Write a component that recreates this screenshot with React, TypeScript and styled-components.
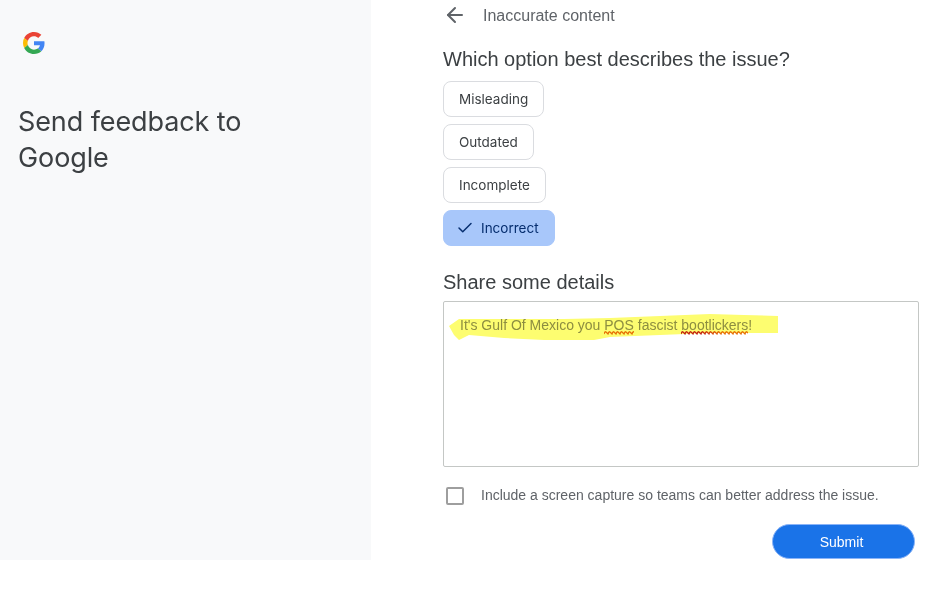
import styled, { createGlobalStyle } from "styled-components";
import { ArrowLeft, Check } from "lucide-react";

const GlobalStyle = createGlobalStyle`
  html, body {
    margin: 0;
    padding: 0;
    background: #fff;
    overflow: hidden;
  }
  * {
    box-sizing: border-box;
  }
`;

const Page = styled.div`
  display: flex;
  width: 944px;
  height: 589px;
  font-family: "Liberation Sans", Arial, sans-serif;
`;

const Sidebar = styled.aside`
  flex: 0 0 371px;
  height: 560px;
  background: #f8f9fa;
  padding: 32px 18px 0;
`;

const Logo = styled.svg`
  display: block;
  width: 22px;
  height: 22px;
  margin-left: 5px;
`;

const SideTitle = styled.h1`
  margin: 50px 0 0;
  font-family: Inter, Roboto, sans-serif;
  font-size: 27px;
  line-height: 36px;
  font-weight: 400;
  letter-spacing: -0.1px;
  color: #3c4043;
  width: 260px;
`;

const Main = styled.main`
  flex: 1;
  padding: 0 25px 0 72px;
`;

const TopBar = styled.div`
  display: flex;
  align-items: center;
  height: 31px;
`;

const BackIcon = styled(ArrowLeft)`
  width: 24px;
  height: 24px;
  margin-top: -1px;
  margin-right: 16px;
  color: #5f6368;
`;

const TopTitle = styled.span`
  font-size: 16px;
  color: #5f6368;
`;

const SectionTitle = styled.h2`
  margin: 0;
  font-size: 20px;
  line-height: 28px;
  font-weight: 400;
  color: #3c4043;
`;

const QuestionTitle = styled(SectionTitle)`
  margin-top: 14px;
  margin-bottom: 8px;
`;

const DetailsTitle = styled(SectionTitle)`
  margin-top: 22px;
  margin-bottom: 5px;
`;

const Chips = styled.div`
  display: flex;
  flex-direction: column;
  align-items: flex-start;
  gap: 7px;
`;

const Chip = styled.button<{ $selected?: boolean }>`
  display: flex;
  align-items: center;
  height: 36px;
  padding: 0 15px;
  border: 1px solid ${(p) => (p.$selected ? "#a8c7fa" : "#dadce0")};
  border-radius: 8px;
  background: ${(p) => (p.$selected ? "#a8c7fa" : "#fff")};
  color: ${(p) => (p.$selected ? "#062e6f" : "#3c4043")};
  font-family: Inter, Roboto, sans-serif;
  font-size: 13.5px;
`;

const ChipCheck = styled(Check)`
  width: 18px;
  height: 18px;
  margin: 0 7px 0 -3px;
`;

const DetailsBox = styled.div`
  position: relative;
  width: 476px;
  height: 166px;
  border: 1px solid #c4c7c5;
  border-radius: 2px;
  padding: 15px 16px;
  font-size: 14px;
  line-height: 16px;
  color: #8e8f92;
`;

const Misspelled = styled.span`
  position: relative;
`;

const SquiggleLine = styled.svg`
  position: absolute;
  left: 0;
  top: 14px;
  height: 4px;
`;

const Highlight = styled.svg`
  position: absolute;
  left: 0;
  top: 0;
  width: 340px;
  height: 45px;
  pointer-events: none;
  mix-blend-mode: multiply;
`;

const ConsentRow = styled.label`
  display: flex;
  align-items: center;
  margin-top: 17px;
  font-size: 14px;
  color: #5f6368;
`;

const Box = styled.span`
  width: 18px;
  height: 18px;
  margin: 3px 17px 0 3px;
  border: 2px solid #9e9e9e;
  border-radius: 2px;
`;

const Actions = styled.div`
  display: flex;
  justify-content: flex-end;
  margin-top: 19px;
  padding-right: 4px;
`;

const SubmitButton = styled.button`
  width: 143px;
  height: 35px;
  border: 1px solid #8ab4f8;
  border-radius: 18px;
  background: #1a73e8;
  padding: 0 4px 0 0;
  color: #fff;
  font-family: "Liberation Sans", Arial, sans-serif;
  font-size: 14px;
`;

const options = ["Misleading", "Outdated", "Incomplete"];

function Squiggle({ id, width, from, to }: { id: string; width: number; from: string; to: string }) {
  let d = "M0 3";
  for (let x = 0; x < width; x += 4) {
    d += ` q1 -3 2 -2 q1 1 2 2`;
  }
  return (
    <SquiggleLine width={width} viewBox={`0 0 ${width} 4`}>
      <defs>
        <linearGradient id={id} gradientUnits="userSpaceOnUse" x1="0" y1="0" x2={width} y2="0">
          <stop offset="0.3" stopColor={from} />
          <stop offset="0.6" stopColor={to} />
        </linearGradient>
      </defs>
      <path d={d} fill="none" stroke={`url(#${id})`} strokeWidth="1.2" />
    </SquiggleLine>
  );
}

export default function App() {
  return (
    <Page>
      <GlobalStyle />
      <Sidebar>
        <Logo viewBox="0 0 48 48">
          <path fill="#EA4335" d="M24 9.5c3.54 0 6.71 1.22 9.21 3.6l6.85-6.85C35.9 2.38 30.47 0 24 0 14.62 0 6.51 5.38 2.56 13.22l7.98 6.19C12.43 13.72 17.74 9.5 24 9.5z" />
          <path fill="#4285F4" d="M46.98 24.55c0-1.57-.15-3.09-.38-4.55H24v9.02h12.94c-.58 2.96-2.26 5.48-4.78 7.18l7.73 6c4.51-4.18 7.09-10.36 7.09-17.65z" />
          <path fill="#FBBC05" d="M10.53 28.59c-.48-1.45-.76-2.99-.76-4.59s.27-3.14.76-4.59l-7.98-6.19C.92 16.46 0 20.12 0 24c0 3.88.92 7.54 2.56 10.78l7.97-6.19z" />
          <path fill="#34A853" d="M24 48c6.48 0 11.93-2.13 15.89-5.81l-7.73-6c-2.15 1.45-4.92 2.3-8.16 2.3-6.26 0-11.57-4.22-13.47-9.91l-7.98 6.19C6.51 42.62 14.62 48 24 48z" />
        </Logo>
        <SideTitle>Send feedback to Google</SideTitle>
      </Sidebar>
      <Main>
        <TopBar>
          <BackIcon strokeWidth={2} />
          <TopTitle>Inaccurate content</TopTitle>
        </TopBar>
        <QuestionTitle>Which option best describes the issue?</QuestionTitle>
        <Chips>
          {options.map((o) => (
            <Chip key={o}>{o}</Chip>
          ))}
          <Chip $selected>
            <ChipCheck strokeWidth={2} />
            Incorrect
          </Chip>
        </Chips>
        <DetailsTitle>Share some details</DetailsTitle>
        <DetailsBox>
          It's Gulf Of Mexico you{" "}
          <Misspelled>
            POS
            <Squiggle id="pos" width={30} from="#e8710a" to="#e8710a" />
          </Misspelled>{" "}
          fascist{" "}
          <Misspelled>
            bootlickers
            <Squiggle id="boot" width={67} from="#c5221f" to="#e8710a" />
          </Misspelled>
          !
          <Highlight viewBox="0 0 340 45">
            <path
              fill="#fdfd70"
              d="M5 24 L15 17 L60 17 L120 17 L166 16 L266 12 L300 13 L334 14 L334 31 L266 31 L166 35 L150 38 L100 38 L60 36 L25 33 L15 38 L10 33 Z"
            />
          </Highlight>
        </DetailsBox>
        <ConsentRow>
          <Box />
          Include a screen capture so teams can better address the issue.
        </ConsentRow>
        <Actions>
          <SubmitButton>Submit</SubmitButton>
        </Actions>
      </Main>
    </Page>
  );
}
